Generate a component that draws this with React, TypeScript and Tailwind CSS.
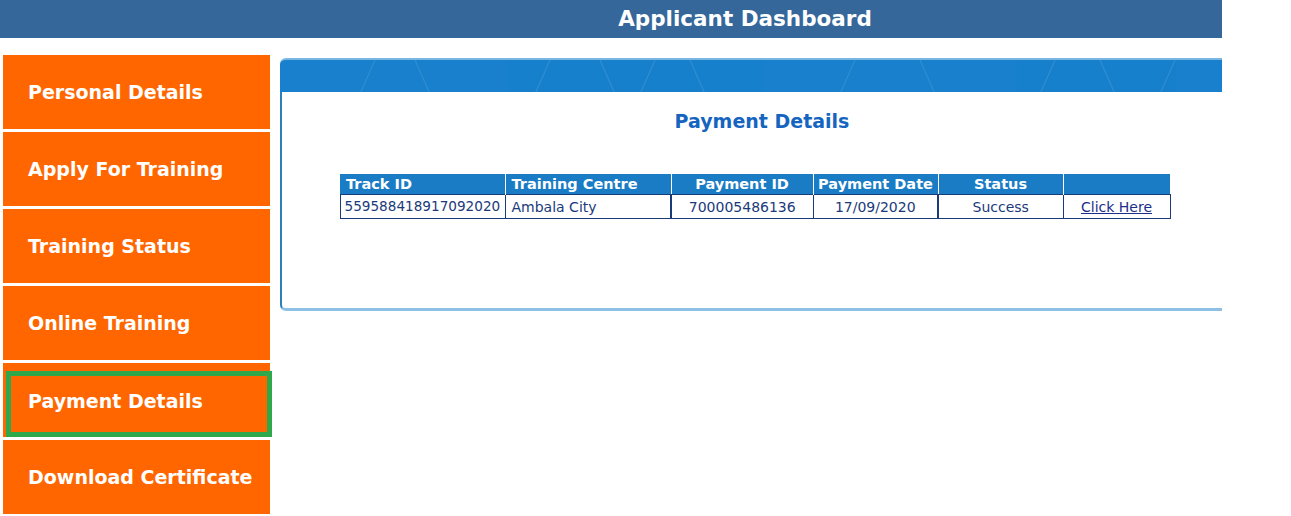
import React from 'react';

const menu = [
  'Personal Details',
  'Apply For Training',
  'Training Status',
  'Online Training',
  'Payment Details',
  'Download Certificate',
];

const cols = [
  { head: 'Track ID', cell: '559588418917092020', w: 'w-[165px]', align: 'text-left' },
  { head: 'Training Centre', cell: 'Ambala City', w: 'w-[166px]', align: 'text-left' },
  { head: 'Payment ID', cell: '700005486136', w: 'w-[142px]', align: 'text-center' },
  { head: 'Payment Date', cell: '17/09/2020', w: 'w-[125px]', align: 'text-center' },
  { head: 'Status', cell: 'Success', w: 'w-[125px]', align: 'text-center' },
];

const App: React.FC = () => {
  return (
    <div className="w-[1222px] bg-white font-['DejaVu_Sans',Verdana,sans-serif]">
      {/* Header */}
      <div className="h-[38px] bg-[#35679a] flex items-center">
        <div className="w-[280px]" />
        <div className="flex-1 text-center text-white font-bold text-[21.5px] pr-[12px]">Applicant Dashboard</div>
      </div>

      <div className="flex pt-[17px]">
        {/* Sidebar */}
        <div className="w-[270px] pl-[3px] flex flex-col gap-[3px]">
          {menu.map((m) => (
            <div key={m} className="relative h-[74px] bg-[#ff6600] flex items-center pl-[25px] text-white font-bold text-[19px]">
              {m === 'Payment Details' && (
                <div className="absolute left-[3px] top-[8px] w-[266px] h-[66px] bg-[#2fa84c] p-[5px]">
                  <div className="w-full h-full bg-[#ff6600]" />
                </div>
              )}
              <span className={m === 'Payment Details' ? 'relative top-[1px]' : ''}>{m}</span>
            </div>
          ))}
        </div>

        {/* Content panel */}
        <div className="flex-1 pl-[10px] pt-[3px]">
          <div className="relative h-[34px] rounded-tl-[6px] bg-[#1880cc] border-t-[2px] border-[#7ab6e2] overflow-hidden">
            <svg className="absolute inset-0" width="942" height="34" viewBox="0 0 942 34">
              <g stroke="#3a93d3" strokeWidth="1.2" fill="none" opacity="0.7">
                <path d="M80 34 L95 0 M135 0 L150 34 M80 34 H150" />
                <path d="M255 34 L270 0 M320 0 L335 34" />
                <path d="M360 34 L375 0 M410 0 L425 34" />
                <path d="M560 34 L575 0 M640 0 L655 34" />
                <path d="M760 34 L775 0 M820 0 L835 34 M760 34 H835" />
                <path d="M880 34 L895 0" />
              </g>
            </svg>
          </div>
          <div className="h-[219px] border-l-[2px] border-b-[3px] border-l-[#2e7fb8] border-b-[#8ec0e6] rounded-bl-[6px] flex flex-col items-center">
            <div className="mt-[15px] text-[#1565c0] font-bold text-[19px] pl-[20px]">Payment Details</div>
            <table className="mt-[38px] ml-[6px] border-collapse text-[14px]">
              <thead>
                <tr className="bg-[#1a7cc4] text-white h-[21px] text-[14.5px]">
                  {cols.map((c, i) => (
                    <th key={c.head} className={`${c.w} ${i < 2 ? 'text-left pl-[6px]' : 'text-center'} font-bold border-r border-white p-0 leading-none`}>
                      {c.head}
                    </th>
                  ))}
                  <th className="w-[107px] p-0" />
                </tr>
              </thead>
              <tbody>
                <tr className="h-[24px] text-[#1b3a7a] border border-[#1b3a7a]">
                  {cols.map((c, i) => (
                    <td key={c.head} className={`${c.align} ${i === 0 ? 'pl-[4px] text-[13.6px]' : i === 1 ? 'pl-[6px]' : ''} ${i === 2 || i === 4 ? 'border-l-[2px]' : 'border-l'} border-[#1b3a7a] p-0 leading-none`}>
                      {c.cell}
                    </td>
                  ))}
                  <td className="text-center border-l border-r border-[#1b3a7a] p-0 leading-none">
                    <a href="#" className="underline text-[#1b2e8a]">Click Here</a>
                  </td>
                </tr>
              </tbody>
            </table>
          </div>
        </div>
      </div>
    </div>
  );
};

export default App;
